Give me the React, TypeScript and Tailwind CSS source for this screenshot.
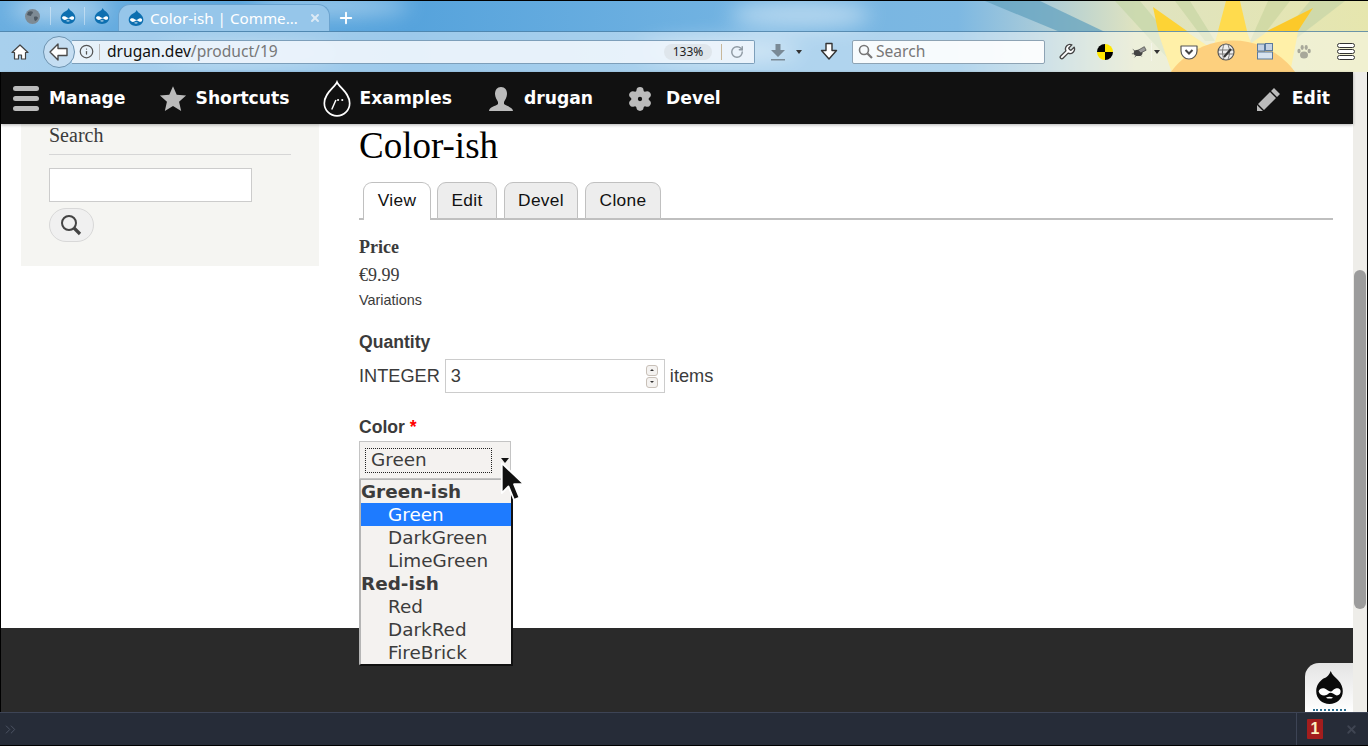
import { Settings, RotateCw, Plus, X, ChevronsRight, Info } from "lucide-react";

const sans = "font-['Liberation_Sans',Arial,sans-serif]";
const serif = "font-['Liberation_Serif','Times_New_Roman',serif]";
const deja = "font-['DejaVu_Sans',sans-serif]";
const ui = "font-['Noto_Sans',sans-serif]";

const DrupalDrop = ({ size = 16, height, color = "#0d6fb0", face = "#fff" }: { size?: number; height?: number; color?: string; face?: string }) => (
  <svg width={size} height={height ?? size} viewBox="0 0 24 26" preserveAspectRatio="none">
    <path d="M13 0c1 3 4 5 6 7 3 3 4 6 4 9 0 6-5 10-11 10S1 22 1 16c0-5 3-8 6-10 3-1 5-3 6-6z" fill={color} />
    <path d="M3 16c1-3 5-3 7-1 2 1 3 2 5 0 2-2 5-2 6 0 1 3-2 5-4 4-2-1-4-3-6-1-2 2-7 2-8-2z" fill={face} />
    <path d="M9 21c2-1 4-1 6 0-2 1-4 1-6 0z" fill={face} />
  </svg>
);

// lightweight persona theme behind the browser chrome
const ThemeArt = () => (
  <svg className="absolute inset-0" width="1368" height="72" viewBox="0 0 1368 72">
    <defs>
      <linearGradient id="sky" x1="0" x2="1" y1="0" y2="0">
        <stop offset="0" stopColor="#6aaee0" />
        <stop offset="0.3" stopColor="#56a3dc" />
        <stop offset="0.55" stopColor="#74b4e2" />
        <stop offset="0.7" stopColor="#7db8e2" />
        <stop offset="0.76" stopColor="#a9cbd9" />
        <stop offset="0.83" stopColor="#dfe3c0" />
        <stop offset="1" stopColor="#e6e6ae" />
      </linearGradient>
      <filter id="blur"><feGaussianBlur stdDeviation="10" /></filter>
    </defs>
    <rect width="1368" height="72" fill="url(#sky)" />
    <g filter="url(#blur)" fill="#fff" opacity="0.45">
      <ellipse cx="60" cy="8" rx="50" ry="12" />
      <ellipse cx="330" cy="5" rx="80" ry="9" />
      <ellipse cx="800" cy="14" rx="70" ry="14" />
      <ellipse cx="720" cy="50" rx="80" ry="12" />
      <ellipse cx="250" cy="52" rx="90" ry="8" />
    </g>
    <path d="M985 0L1040 0L1105 31L1060 31Z" fill="#5f9fbd" opacity="0.7" />
    <path d="M1115 0L1140 0L1190 60L1170 60Z" fill="#c3d5a8" opacity="0.7" />
    <path d="M1175 0L1190 0L1215 40L1205 40Z" fill="#c8d6a4" opacity="0.7" />
    <path d="M1268 0L1290 0L1255 45L1248 45Z" fill="#cbd6a0" opacity="0.7" />
    <path d="M1310 0L1345 0L1280 50L1268 50Z" fill="#c6d4a6" opacity="0.7" />
    <path d="M1153 6L1187 30H1158Z" fill="#fdd335" />
    <path d="M1226 0H1240L1247 30H1218Z" fill="#ffdb4d" />
    <path d="M1313 7L1298 30H1267Z" fill="#fcc92a" />
    <rect y="31" width="1368" height="41" fill="#fff" opacity="0.42" />
    <path d="M1158 31H1187L1230 60L1172 72Z" fill="#fff0a8" />
    <path d="M1218 31H1247L1254 50H1212Z" fill="#fff0a8" />
    <path d="M1267 31H1298L1290 72L1240 50Z" fill="#fff0a8" />
    <circle cx="1233" cy="116.5" r="77" fill="#fdd07e" />
    <rect y="30" width="1368" height="1" fill="#4c7fa5" opacity="0.8" />
    <rect y="71" width="1368" height="1" fill="#5f88a0" />
  </svg>
);

const BrowserChrome = () => (
  <div className={`relative h-[72px] shrink-0 overflow-hidden border-t border-black ${ui}`}>
    <ThemeArt />
    <div className="relative flex h-[30px] items-end pl-[25px]">
      <div className="flex h-[30px] w-[25px] items-center">
        <svg width="15" height="15" viewBox="0 0 15 15">
          <circle cx="7.5" cy="7.5" r="7.5" fill="#7d8a94" />
          <path d="M3 3c2-1 4-1 5 0 0 2-2 2-2 4-2 0-3-1-4-1zM9 8c2-1 4 0 4 1-1 2-2 3-3 3-1-1-1-3-1-4z" fill="#4d5963" />
        </svg>
      </div>
      <div className="h-[18px] w-px self-center bg-white/40" />
      <div className="flex h-[30px] w-[33px] items-center justify-center"><DrupalDrop /></div>
      <div className="h-[18px] w-px self-center bg-white/40" />
      <div className="flex h-[30px] w-[33px] items-center justify-center"><DrupalDrop /></div>
      <div className="flex h-[27px] w-[212px] items-center rounded-t-[12px] border border-b-0 border-[#6ba3cf] bg-[#96c6ea] pl-[9px] text-white">
        <DrupalDrop />
        <span className="ml-[6px] w-[156px] whitespace-nowrap text-[15.2px]">Color-ish | Comme…</span>
        <X size={12} strokeWidth={4} className="ml-[3px] text-[#dbe9f5]" />
      </div>
      <Plus size={18} strokeWidth={2.5} className="mb-[4px] ml-[7px] text-white" />
    </div>
    <div className="relative flex h-[41px] items-center pl-[11px]">
      <svg width="18" height="18" viewBox="0 0 18 18" className="shrink-0">
        <path d="M9 2L1 9.5h2.5V16h4v-4h3v4h4V9.5H17z" fill="#fff" stroke="#444" strokeWidth="1.2" strokeLinejoin="round" />
      </svg>
      <div className="z-10 ml-[14px] flex size-[32px] shrink-0 items-center justify-center rounded-full border border-[#6d93b0] bg-[#c5def2]">
        <svg width="20" height="18" viewBox="0 0 20 18">
          <path d="M9 1L1 9l8 8v-4.5h9v-7H9z" fill="#fff" stroke="#4a4a4a" strokeWidth="1.4" strokeLinejoin="round" />
        </svg>
      </div>
      <div className="-ml-[3px] flex h-[24px] w-[683px] shrink-0 items-center rounded-r-[2px] border border-l-0 border-[#7d9fba] bg-[#eef5fc]/90 pl-[7px]">
        <Info size={15} className="shrink-0 text-[#555]" />
        <span className="ml-[5px] mr-[7px] h-[16px] w-px bg-[#bbb]" />
        <span className="whitespace-nowrap text-[15.6px] text-[#111]">drugan.dev<span className="text-[#777]">/product/19</span></span>
        <span className="ml-auto flex h-[16px] w-[48px] items-center justify-center rounded-full bg-[#dfe6ec] text-[12px] text-[#222]">133%</span>
        <span className="ml-[9px] h-[16px] w-px bg-[#c8b79a]" />
        <RotateCw size={14} strokeWidth={2.5} className="ml-[8px] mr-[10px] text-[#8f9aa3]" />
      </div>
      <div className="ml-[15px] flex shrink-0 items-center">
        <svg width="16" height="18" viewBox="0 0 16 18">
          <path d="M5.5 1h5v6H15l-7 7-7-7h4.5z" fill="#7a8a96" />
          <rect x="1" y="16" width="14" height="1.5" fill="#7a8a96" />
        </svg>
        <span className="ml-[10px] h-0 w-0 border-x-[3px] border-t-[4px] border-x-transparent border-t-[#333]" />
      </div>
      <svg width="18" height="19" viewBox="0 0 18 19" className="ml-[18px] shrink-0">
        <path d="M6 1.5h6v7h4.5L9 17 1.5 8.5H6z" fill="#fff" stroke="#333" strokeWidth="1.4" strokeLinejoin="round" />
      </svg>
      <div className="ml-[14px] flex h-[24px] w-[193px] shrink-0 items-center gap-[3px] rounded-[2px] border border-[#8da3b4] bg-white/90 pl-[5px] text-[15.6px] text-[#777]">
        <svg width="15" height="15" viewBox="0 0 15 15" className="shrink-0">
          <circle cx="6" cy="6" r="4.5" fill="none" stroke="#777" strokeWidth="1.6" />
          <path d="M9.5 9.5L14 14" stroke="#777" strokeWidth="2.2" />
        </svg>
        Search
      </div>
      <svg width="18" height="18" viewBox="0 0 24 24" className="ml-[13px] shrink-0">
        <path d="M14.7 6.3a1 1 0 0 0 0 1.4l1.6 1.6a1 1 0 0 0 1.4 0l3.77-3.77a6 6 0 0 1-7.94 7.94l-6.91 6.91a2.12 2.12 0 0 1-3-3l6.91-6.91a6 6 0 0 1 7.94-7.94z" fill="#fff" stroke="#444" strokeWidth="1.8" strokeLinejoin="round" />
      </svg>
      <div className="ml-[21px] size-[16px] shrink-0 rounded-full bg-[conic-gradient(#ffe600_0_25%,#000_25%_50%,#ffe600_50%_75%,#000_75%)]" />
      <svg width="16" height="14" viewBox="0 0 18 14" className="ml-[18px] shrink-0">
        <ellipse cx="8" cy="8" rx="5" ry="3.5" fill="#444" />
        <path d="M8 5l7-4 2 4-6 3zM2 4l4 3M1 9l4 0M4 13l3-3M12 12l-3-3" fill="#999" stroke="#444" strokeWidth="0.8" />
      </svg>
      <span className="ml-[4px] h-[18px] w-px shrink-0 bg-white/40" />
      <span className="ml-[2px] h-0 w-0 shrink-0 border-x-[3px] border-t-[4px] border-x-transparent border-t-[#333]" />
      <svg width="18" height="16" viewBox="0 0 18 16" className="ml-[20px] shrink-0">
        <path d="M1 2h16v5a8 8 0 0 1-16 0z" fill="#fff" stroke="#555" strokeWidth="1.2" strokeLinejoin="round" />
        <path d="M5.5 6L9 9.5 12.5 6" fill="none" stroke="#444" strokeWidth="2" />
      </svg>
      <svg width="18" height="18" viewBox="0 0 18 18" className="ml-[19px] shrink-0">
        <circle cx="9" cy="9" r="8" fill="#eee" stroke="#555" strokeWidth="1.2" />
        <path d="M2 7h14M2 11h14M7 1.5c-2 5-2 10 0 15M11 1.5c2 5 2 10 0 15" fill="none" stroke="#777" />
        <path d="M7 14l7-8" stroke="#333" strokeWidth="2" />
      </svg>
      <svg width="16" height="17" viewBox="0 0 16 17" className="ml-[22px] shrink-0">
        <rect x="0.5" y="1" width="7" height="7" fill="#c4d2e2" stroke="#5b7a9c" />
        <rect x="8.5" y="0.5" width="7" height="7" fill="#c4d2e2" stroke="#5b7a9c" />
        <rect x="0.5" y="9" width="15" height="7" fill="#d8e3ee" stroke="#5b7a9c" />
      </svg>
      <svg width="16" height="16" viewBox="0 0 16 16" className="ml-[23px] shrink-0" fill="#a8a89a">
        <ellipse cx="8" cy="11" rx="4" ry="3.5" />
        <ellipse cx="3" cy="7" rx="1.6" ry="2.2" />
        <ellipse cx="6.2" cy="3.5" rx="1.6" ry="2.4" />
        <ellipse cx="10.2" cy="3.5" rx="1.6" ry="2.4" />
        <ellipse cx="13.2" cy="7" rx="1.6" ry="2.2" />
      </svg>
      <div className="ml-[25px] flex w-[18px] shrink-0 flex-col gap-[1px]">
        <span className="h-[5px] rounded-sm border border-[#333] bg-white" />
        <span className="h-[5px] rounded-sm border border-[#333] bg-white" />
        <span className="h-[5px] rounded-sm border border-[#333] bg-white" />
      </div>
    </div>
  </div>
);

const AdminToolbar = () => (
  <div className={`relative z-10 flex h-[52px] shrink-0 items-center bg-[#111] pl-[12px] pr-[23px] pt-[1px] text-[17.2px] font-bold text-white shadow-[0_1px_3px_rgba(0,0,0,0.3)] ${deja}`}>
    <div className="flex items-center">
      <div className="flex w-[26px] flex-col gap-[5px]">
        <span className="h-[5px] rounded-full bg-[#bbb]" />
        <span className="h-[5px] rounded-full bg-[#bbb]" />
        <span className="h-[5px] rounded-full bg-[#bbb]" />
      </div>
      <span className="ml-[10px]">Manage</span>
      <svg width="28" height="28" viewBox="0 0 24 24" className="ml-[33px]">
        <path d="M12 1l3.2 7.4 8 .7-6 5.3 1.8 7.9-7-4.2-7 4.2 1.8-7.9-6-5.3 8-.7z" fill="#bbb" />
      </svg>
      <span className="ml-[9px]">Shortcuts</span>
      <svg width="30" height="38" viewBox="0 0 28 36" className="ml-[32px]">
        <path d="M14 2c2 5 12 10 12 20a12 12 0 0 1-24 0C2 12 12 7 14 2z" fill="none" stroke="#fff" strokeWidth="1.6" />
        <path d="M9 28l4-9" stroke="#fff" strokeWidth="1.4" />
        <circle cx="15" cy="19" r="1" fill="#fff" />
        <circle cx="19" cy="19" r="1" fill="#fff" />
      </svg>
      <span className="ml-[8px]">Examples</span>
      <svg width="26" height="26" viewBox="0 0 26 26" className="ml-[36px]">
        <path d="M13 1c4 0 6 3 6 7 0 3-2 6-3 8v2c2 2 9 3 9 7H1c0-4 7-5 9-7v-2C9 14 7 11 7 8c0-4 2-7 6-7z" fill="#bbb" />
      </svg>
      <span className="ml-[10px]">drugan</span>
      <Settings size={26} fill="#bbb" stroke="#bbb" strokeWidth={2} className="ml-[34px] [&>circle]:fill-[#111]" />
      <span className="ml-[13px]">Devel</span>
    </div>
    <div className="ml-auto flex items-center">
      <svg width="26" height="26" viewBox="0 0 26 26">
        <path d="M18 2l6 6-3 3-6-6zM14 6l6 6L8 24l-6-6zM1 19l6 6-6 0z" fill="#bbb" />
      </svg>
      <span className="ml-[10px]">Edit</span>
    </div>
  </div>
);

const Sidebar = () => (
  <aside className={`ml-[20px] h-[142px] w-[298px] shrink-0 bg-[#f5f5f2] pl-[28px] pr-[28px] ${serif}`}>
    <h2 className="flex h-[31px] items-center border-b border-[#d6d6d6] text-[20px] leading-none text-[#3b3b3b]">
      <span className="-mt-[9px]">Search</span>
    </h2>
    <div className="mt-[13px] h-[34px] w-[203px] border border-[#ccc] bg-white" />
    <button className="mt-[6px] flex h-[34px] w-[45px] items-center justify-center rounded-[17px] border border-[#d8d8d8] bg-[#f0f0f0] pr-[2px]">
      <svg width="22" height="22" viewBox="0 0 22 22">
        <circle cx="9" cy="9" r="7" fill="none" stroke="#444" strokeWidth="2" />
        <path d="M14 14l6 6" stroke="#444" strokeWidth="3.2" />
      </svg>
    </button>
  </aside>
);

const Tabs = () => (
  <div className={`flex h-[38px] items-end border-b-2 border-[#bfbfbf] pl-[4px] text-[17.33px] tracking-[0.3px] text-[#111] ${sans}`}>
    <div className="-mb-[2px] flex h-[38px] w-[68px] items-center justify-center rounded-t-[9px] border border-b-0 border-[#c0c0c0] bg-white pb-[2px]">View</div>
    <div className="-mb-[1px] ml-[6px] flex h-[37px] w-[60px] items-center justify-center rounded-t-[9px] border border-[#c0c0c0] bg-[#ededed]">Edit</div>
    <div className="-mb-[1px] ml-[7px] flex h-[37px] w-[74px] items-center justify-center rounded-t-[9px] border border-[#c0c0c0] bg-[#ededed]">Devel</div>
    <div className="-mb-[1px] ml-[7px] flex h-[37px] w-[76px] items-center justify-center rounded-t-[9px] border border-[#c0c0c0] bg-[#ededed]">Clone</div>
  </div>
);

const options = [
  { label: "Green-ish", group: true },
  { label: "Green", active: true },
  { label: "DarkGreen" },
  { label: "LimeGreen" },
  { label: "Red-ish", group: true },
  { label: "Red" },
  { label: "DarkRed" },
  { label: "FireBrick" },
];

const SelectDropdown = () => (
  <div className={`absolute left-0 top-[38px] z-20 w-[153px] border-y border-r border-l-2 border-[#b5b5b5] border-r-[#111] border-b-[#111] bg-[#f4f2f0] text-[18.4px] leading-[23px] text-[#3c3c3c] shadow-[1px_1px_0_#111] ${deja}`}>
    {options.map((o) => (
      <div
        key={o.label}
        className={`h-[23px] whitespace-nowrap ${o.group ? "font-bold" : "pl-[27px]"} ${o.active ? "bg-[#1e7bff] text-white" : ""}`}
      >
        {o.label}
      </div>
    ))}
  </div>
);

const Cursor = () => (
  <svg className="absolute left-[140px] top-[21px] z-30" width="30" height="40" viewBox="0 0 26 36">
    <path d="M2 1v27l6-6 5 12 5-2-5-12h9z" fill="#111" stroke="#fff" strokeWidth="1.6" strokeLinejoin="round" />
  </svg>
);

const ProductForm = () => (
  <main className="ml-[40px] w-[974px] shrink-0">
    <h1 className={`h-[58px] pt-[1px] text-[37px] leading-[42px] text-black ${serif}`}>Color-ish</h1>
    <Tabs />
    <div className={`mt-[17px] text-[18px] leading-[21px] font-bold text-[#3b3b3b] ${serif}`}>Price</div>
    <div className={`mt-[7px] text-[18px] leading-[21px] text-[#3b3b3b] ${serif}`}>€9.99</div>
    <div className={`mt-[5px] text-[14.4px] leading-[18px] text-[#3b3b3b] ${sans}`}>Variations</div>
    <div className={`mt-[23px] text-[17.6px] leading-[20px] font-bold text-[#3b3b3b] ${sans}`}>Quantity</div>
    <div className={`mt-[7px] flex items-center gap-[5px] text-[18.2px] text-[#3b3b3b] ${sans}`}>
      <span className="pt-[2px]">INTEGER</span>
      <div className="flex h-[34px] w-[220px] items-center justify-between border border-[#ccc] bg-white pl-[5px] pr-[6px]">
        <span className="pt-[2px]">3</span>
        <div className="flex flex-col gap-[1px]">
          <span className="flex h-[11px] w-[12px] items-center justify-center rounded-[3px] border border-[#c8c0b8] bg-[#f4f2f0]">
            <span className="h-0 w-0 border-x-[2px] border-b-[2px] border-x-transparent border-b-[#333]" />
          </span>
          <span className="flex h-[11px] w-[12px] items-center justify-center rounded-[3px] border border-[#c8c0b8] bg-[#f4f2f0]">
            <span className="h-0 w-0 border-x-[2px] border-t-[2px] border-x-transparent border-t-[#333]" />
          </span>
        </div>
      </div>
      <span className="pt-[2px]">items</span>
    </div>
    <div className={`mt-[24px] text-[17.6px] leading-[20px] font-bold text-[#3b3b3b] ${sans}`}>
      Color <span className="text-[#f00]">*</span>
    </div>
    <div className="relative mt-[4px] h-[38px] w-[152px]">
      <div className={`flex h-[38px] items-center border border-[#c4c4c4] bg-[#f4f2f0] pl-[5px] text-[18.4px] text-[#3c3c3c] ${deja}`}>
        <span className="flex h-[25px] w-[127px] items-center border border-dotted border-[#222] pl-[5px]">Green</span>
        <span className="ml-[9px] h-0 w-0 border-x-[4px] border-t-[5px] border-x-transparent border-t-[#111]" />
      </div>
      <SelectDropdown />
      <Cursor />
    </div>
  </main>
);

const DevBar = () => (
  <div className="flex h-[34px] shrink-0 items-center border-y border-t-[#3d4455] border-b-black bg-[#262c38]">
    <ChevronsRight size={17} strokeWidth={1.4} className="ml-[2px] text-[#4c5363]" />
    <div className="ml-auto flex h-full items-center border-l border-[#3d4455] pl-[10px] pr-[10px]">
      <span className={`flex h-[20px] w-[16px] items-center justify-center rounded-[1px] bg-[#a31d1d] text-[16px] font-bold text-[#fdf2c0] ${sans}`}>1</span>
      <X size={13} strokeWidth={3.5} className="ml-[22px] text-[#3f4552]" />
    </div>
  </div>
);

export default function App() {
  return (
    <div className="flex h-[746px] w-[1368px] flex-col overflow-hidden bg-black">
      <BrowserChrome />
      <div className="flex min-h-0 flex-1 border-x border-black">
        <div className="flex w-[1352px] shrink-0 flex-col">
          <AdminToolbar />
          <div className="flex h-[504px] shrink-0 bg-white">
            <Sidebar />
            <ProductForm />
          </div>
          <div className="flex flex-1 items-end justify-end bg-[#2a2a2a]">
            <div className="flex h-[49px] w-[48px] flex-col items-center rounded-tl-[14px] bg-gradient-to-b from-[#e4e4e4] to-white pt-[8px]">
              <DrupalDrop size={29} height={33} color="#0a0a0a" />
              <span className="mt-[5px] w-[33px] border-b-2 border-dotted border-[#2b6d8f]" />
            </div>
          </div>
        </div>
        <div className="flex-1 bg-[#eeede9] px-[1px]">
          <div className="mt-[198px] h-[339px] rounded-[6px] bg-[#9c9c9c]" />
        </div>
      </div>
      <DevBar />
    </div>
  );
}
